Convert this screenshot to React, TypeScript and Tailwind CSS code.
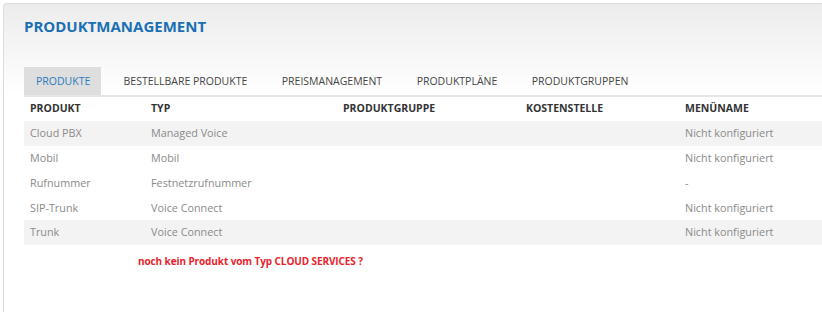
import React from 'react';

const tabs = ['PRODUKTE', 'BESTELLBARE PRODUKTE', 'PREISMANAGEMENT', 'PRODUKTPLÄNE', 'PRODUKTGRUPPEN'];

const rows = [
  { name: 'Cloud PBX', typ: 'Managed Voice', menu: 'Nicht konfiguriert', shaded: true },
  { name: 'Mobil', typ: 'Mobil', menu: 'Nicht konfiguriert', shaded: false },
  { name: 'Rufnummer', typ: 'Festnetzrufnummer', menu: '-', shaded: false },
  { name: 'SIP-Trunk', typ: 'Voice Connect', menu: 'Nicht konfiguriert', shaded: false },
  { name: 'Trunk', typ: 'Voice Connect', menu: 'Nicht konfiguriert', shaded: true },
];

const cols = 'grid grid-cols-[121px_192px_183px_159px_1fr]';

const App = () => {
  return (
    <div className="w-[822px] h-[312px] bg-white pl-[3px] pt-[3px] overflow-hidden font-['Open_Sans',sans-serif]">
      <div className="h-[320px] rounded-tl-[4px] border-l border-t border-[#dcdcdc] bg-gradient-to-b from-[#ececec] to-white to-[90px] pl-[20px]">
        {/* Title */}
        <h1 className="pt-[12px] text-[15px] font-bold text-[#1b6fb3] leading-[20px]">
          PRODUKTMANAGEMENT
        </h1>

        {/* Tabs */}
        <div className="mt-[31px] flex border-b-2 border-[#e6e6e6] text-[10.5px] text-[#444] leading-[28px]">
          {tabs.map((t, i) => (
            <div
              key={t}
              className={i === 0 ? 'bg-[#dedede] text-[#2a7bbd] pl-[12px] pr-[11px] mr-[5px]' : 'px-[17.25px]'}
            >
              {t}
            </div>
          ))}
        </div>

        {/* Table */}
        <div className="text-[10.8px]">
          <div className={`${cols} h-[24px] items-center pl-[6px] font-bold text-[#333] text-[10.5px]`}>
            <div>PRODUKT</div>
            <div>TYP</div>
            <div>PRODUKTGRUPPE</div>
            <div>KOSTENSTELLE</div>
            <div>MENÜNAME</div>
          </div>
          {rows.map((r) => (
            <div
              key={r.name}
              className={`${cols} h-[24.75px] items-center pl-[6px] text-[#8a8a8a] ${r.shaded ? 'bg-[#f3f3f3]' : ''}`}
            >
              <div>{r.name}</div>
              <div>{r.typ}</div>
              <div></div>
              <div></div>
              <div>{r.menu}</div>
            </div>
          ))}
        </div>

        <p className="pl-[114px] pt-[9px] text-[10px] font-bold text-[#e8242c] tracking-[-0.1px]">
          noch kein Produkt vom Typ CLOUD SERVICES ?
        </p>
      </div>
    </div>
  );
};

export default App;
